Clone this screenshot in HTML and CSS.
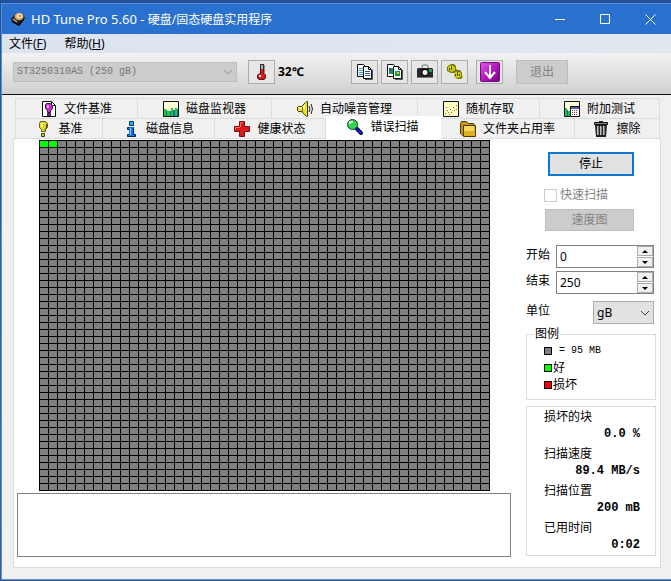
FILE: index.html
```html
<!DOCTYPE html>
<html lang="zh-CN">
<head>
<meta charset="utf-8">
<meta name="viewport" content="width=device-width, initial-scale=1">
<title>HD Tune Pro 5.60</title>
<link rel="stylesheet" href="styles.css">
</head>
<body>
<div class="window">
  <header class="titlebar">
    <svg class="icon" viewBox="0 0 16 16" aria-hidden="true">
      <path d="M6 2l7 1 2 4-6 8-7-4-1-3z" fill="#211d20"/><path d="M2 10l7 3 5-6v2l-5 6-7-4z" fill="#060606"/>
      <ellipse cx="9" cy="5.500" rx="4.500" ry="3.800" fill="#d9a662"/><ellipse cx="9.500" cy="5" rx="3" ry="2.300" fill="#f6dfb3"/><circle cx="10" cy="5" r="1" fill="#a56c3a"/>
      <path d="M3 8l4 3" stroke="#b9aaa2" stroke-width="1.500"/>
    </svg>
    <h1><span class="product">HD Tune Pro 5.60 - </span>硬盘/固态硬盘实用程序</h1>
    <div class="controls">
      <button aria-label="最小化"><svg viewBox="0 0 11 11"><path d="M0 5.500h10"/></svg></button>
      <button aria-label="最大化"><svg viewBox="0 0 11 11"><path d="M.5.500h9v9h-9z"/></svg></button>
      <button aria-label="关闭"><svg viewBox="0 0 11 11"><path d="M.5.500l10 10M10.500.500l-10 10"/></svg></button>
    </div>
  </header>
  <nav class="menubar">
    <a href="#file">文件(<u>F</u>)</a>
    <a href="#help">帮助(<u>H</u>)</a>
  </nav>
  <div class="toolbar">
    <div class="select drive">
      <select aria-label="驱动器" disabled><option>ST3250310AS (250 gB)</option></select>
      <svg viewBox="0 0 10 6" aria-hidden="true"><path d="M1 1l4 4 4-4"/></svg>
    </div>
    <button class="tool" aria-label="温度">
      <svg class="icon" viewBox="0 0 16 16"><path d="M6 0h4v9l2 2v3l-2 2H5l-2-2v-3l3-2z" fill="#611"/><path d="M7 1h2v4H7z" fill="#52d8d8"/><path d="M7 5h2v5l2 1v3l-2 1H6l-2-1v-3l3-1z" fill="#e01818"/><path d="M5 11h2v2H5z" fill="#fff"/><path d="M10 2h1M10 4h1M10 6h1M10 8h1" stroke="#333"/></svg>
    </button>
    <output class="temperature">32℃</output>
    <div class="tools">
      <button class="tool" aria-label="复制文本">
        <svg class="icon" viewBox="0 0 16 16"><path d="M.5.500h6l2 2v10h-8z" fill="#fff" stroke="#111"/><path d="M2 4.500h5M2 6.500h5M2 8.500h5M2 10.500h5" stroke="#2d9be0"/><path d="M6.500 2.500h5l3 3v9h-8z" fill="#fff" stroke="#111"/><path d="M11.500 2.500v3h3" fill="none" stroke="#111"/><path d="M8 7.500h5M8 9.500h5M8 11.500h5" stroke="#2453b8"/><path d="M8 15.500h7.500V6" fill="none" stroke="#555"/></svg>
      </button>
      <button class="tool" aria-label="复制图像">
        <svg class="icon" viewBox="0 0 16 16"><path d="M.5.500h6l2 2v10h-8z" fill="#fff" stroke="#111"/><path d="M2 4h4v6H2z" fill="#169642"/><path d="M2 4h2v3H2z" fill="#2453b8"/><path d="M6.500 2.500h5l3 3v9h-8z" fill="#fff" stroke="#111"/><path d="M11.500 2.500v3h3" fill="none" stroke="#111"/><path d="M8 7h5v5H8z" fill="#159331"/><path d="M10 8h2v2h-2z" fill="#e8c83b"/><path d="M8 7h2v2H8z" fill="#238ad1"/><path d="M8 15.500h7.500V6" fill="none" stroke="#555"/></svg>
      </button>
      <button class="tool" aria-label="截图">
        <svg class="icon" viewBox="0 0 16 16"><path d="M5 4V2l1-1h4l1 1v2" fill="none" stroke="#777"/><path d="M1 4h14l1 1v8H0V5z" fill="#252a2b"/><circle cx="8" cy="8.500" r="4" fill="#111"/><circle cx="8" cy="8.500" r="2.500" fill="#f4f4f4"/><path d="M12 5h3v3h-3z" fill="#18a354"/><path d="M0 13.500h16" stroke="#777"/></svg>
      </button>
      <button class="tool" aria-label="选项">
        <svg class="icon" viewBox="0 0 16 16"><path d="M0 3l2-2 2-1h3l2 2v3l2 1h2l2 3v3l1 1-2 2h-4l-3-3V9L4 9 0 7z" fill="#77770c"/><path d="M1 3l3-2 4 2v3L5 8 1 6zM7 9l3-2 4 2v4l-4 1-3-2z" fill="#cfcf19"/><path d="M4.500 2v4M2.500 4v2M10.500 7v5M8.500 10v2M12.500 10v2" stroke="#4d4d00"/></svg>
      </button>
      <button class="tool save" aria-label="保存">
        <svg class="icon large" viewBox="0 0 20 20"><defs><linearGradient id="violet" x2="1" y2="1"><stop stop-color="#e45ae8"/><stop offset=".55" stop-color="#b313bd"/><stop offset="1" stop-color="#6c0880"/></linearGradient></defs><rect x=".5" y=".5" width="19" height="19" rx="1" fill="url(#violet)" stroke="#6b0f77"/><path d="M10 3v12M5 10l5 6 5-6" fill="none" stroke="#fff" stroke-width="2"/></svg>
      </button>
    </div>
    <button class="push exit" disabled>退出</button>
  </div>

  <main class="content">
    <div class="tabs upper" role="tablist" aria-label="附加功能">
      <button role="tab"><svg class="icon" viewBox="0 0 16 16"><path d="M1.500.500h9l4 4v11h-13z" fill="#fff" stroke="#111"/><path d="M10.500.500v4h4" fill="none" stroke="#111"/><path d="M5.500 2.500h4l2 2v3l-2 2v2h-3v-2l-2-2v-4z" fill="#c32bd0" stroke="#34103a"/><path d="M6 4h2v3H6z" fill="#f2a5fa"/><path d="M6.500 12.500h3v2h-3z" fill="#c32bd0" stroke="#34103a"/></svg>文件基准</button>
      <button role="tab"><svg class="icon" viewBox="0 0 16 16"><path d="M.5.500h15v15H.5z" fill="#ffffd8" stroke="#111"/><path d="M1 8h2v7H1zM4 10h3v5H4zM8 7h2v8H8zM12 7h2v8h-2z" fill="#18ce38"/><path d="M3 9h1v6H3zM7 10h1v5H7zM10 9h2v6h-2zM14 8h1v7h-1z" fill="#1764b0"/></svg>磁盘监视器</button>
      <button role="tab"><svg class="icon" viewBox="0 0 16 16"><path d="M.5 6.500l1-1h3l4-4 1-1h1v15h-1l-5-5h-3l-1-1z" fill="#e9e329" stroke="#3c3800"/><path d="M2 6h3l3-3v5H2z" fill="#ffffa0"/><path d="M5.500 6v5" stroke="#766d09"/><path d="M12 5q2 3 0 6M14 3q3 5 0 10" fill="none" stroke="#222"/></svg>自动噪音管理</button>
      <button role="tab"><svg class="icon" viewBox="0 0 16 16"><path d="M.5.500h15v15H.5z" fill="#ffffc4" stroke="#111"/><path d="M2 12h1v1H2zM4 9h1v1H4zM5 11h1v1H5zM7 8h1v1H7zM8 11h1v1H8zM10 6h1v1h-1zM11 9h1v1h-1zM13 4h1v1h-1zM13 8h1v1h-1zM3 6h1v1H3zM6 13h1v1H6z" fill="#9b681a"/></svg>随机存取</button>
      <button role="tab"><svg class="icon" viewBox="0 0 16 16"><path d="M.5.500h15v15H.5z" fill="#ffffd8" stroke="#111"/><path d="M1 7h2v8H1zM4 10h2v5H4z" fill="#11c744"/><path d="M3 9h1v6H3z" fill="#1764b0"/><path d="M6.500 5.500h9v10h-9z" fill="#fff" stroke="#111"/><path d="M7 6h8v2H7z" fill="#5360a0"/><path d="M8 9.500h6M8 11.500h6M8 13.500h6" stroke="#a3245c" stroke-dasharray="1 1"/></svg>附加测试</button>
    </div>
    <div class="tabs lower" role="tablist" aria-label="功能">
      <button role="tab"><svg class="icon" viewBox="0 0 16 16"><path d="M5.500.500h5l2 2v4l-2 2v2h-4v-2l-2-2v-4z" fill="#ded71c" stroke="#655f10"/><path d="M6 2h2v4H6z" fill="#ffffb0"/><path d="M11.500 3v4l-2 2" fill="none" stroke="#444"/><path d="M6.500 12.500h3v3h-3z" fill="#ded71c" stroke="#333"/></svg>基准</button>
      <button role="tab"><svg class="icon" viewBox="0 0 16 16"><path d="M6.500.500h4v4h-4z" fill="#2ea5ff" stroke="#053473"/><path d="M4.500 6.500h6v7h2v2h-8v-2h2v-5h-2z" fill="#1473ed" stroke="#052455"/><path d="M6 6h4v9H6z" fill="#1473ed"/><path d="M7 7h1v7H7z" fill="#7bccff"/></svg>磁盘信息</button>
      <button role="tab"><svg class="icon" viewBox="0 0 16 16"><path d="M5.500.500h5v5h5v5h-5v5h-5v-5h-5v-5h5z" fill="#db1a1a" stroke="#701010"/><path d="M6.500 6V1.500H9M1.500 9V6.500H6" fill="none" stroke="#f06a6a"/></svg>健康状态</button>
      <button role="tab" class="active" aria-selected="true"><svg class="icon" viewBox="0 0 16 16"><path d="M10 10l4 4" stroke="#050538" stroke-width="4" stroke-linecap="square"/><path d="M10 10l4 4" stroke="#171bbb" stroke-width="2" stroke-linecap="square"/><circle cx="5.500" cy="5.500" r="5" fill="#35d34e" stroke="#164a28"/><path d="M3 5V3h3" fill="none" stroke="#cbffd0" stroke-width="2"/></svg>错误扫描</button>
      <button role="tab"><svg class="icon" viewBox="0 0 16 16"><path d="M.5 12.500v-10l1-2h5l2 2h5l1 2v10h-12z" fill="#c79511" stroke="#4c3904"/><path d="M3.500 4.500h12v11h-12z" fill="#dcb020" stroke="#4c3904"/><path d="M4 5h10v5H4z" fill="#f7d858"/></svg>文件夹占用率</button>
      <button role="tab"><svg class="icon" viewBox="0 0 16 16"><path d="M6 0h4v2H6z" fill="#222"/><path d="M1.500 1.500h13v2h-13z" fill="#888" stroke="#111"/><path d="M2 4h12l-1 12H3z" fill="#222"/><path d="M4.500 5v9M7.500 5v9M10.500 5v9" stroke="#c4c4c4"/><path d="M5.500 5v9M8.500 5v9M11.500 5v9" stroke="#777"/></svg>擦除</button>
    </div>

    <section class="panel">
      <div class="scan">
        <div class="block-map" role="img" aria-label="扫描块"><i class="block"></i><i class="block"></i></div>
        <textarea class="log" aria-label="扫描日志" readonly></textarea>
      </div>
      <form class="side">
        <button type="button" class="push stop">停止</button>
        <label class="quick"><input type="checkbox" disabled>快速扫描</label>
        <button type="button" class="push speed" disabled>速度图</button>
        <div class="field">
          <label for="start">开始</label>
          <div class="spinner">
            <input id="start" type="text" value="0">
            <div class="steps"><button type="button" aria-label="增加开始值"><i class="up"></i></button><button type="button" aria-label="减少开始值"><i class="down"></i></button></div>
          </div>
        </div>
        <div class="field">
          <label for="end">结束</label>
          <div class="spinner">
            <input id="end" type="text" value="250">
            <div class="steps"><button type="button" aria-label="增加结束值"><i class="up"></i></button><button type="button" aria-label="减少结束值"><i class="down"></i></button></div>
          </div>
        </div>
        <div class="field unit">
          <label for="unit">单位</label>
          <div class="select">
            <select id="unit"><option>gB</option></select>
            <svg viewBox="0 0 10 6" aria-hidden="true"><path d="M1 1l4 4 4-4"/></svg>
          </div>
        </div>
        <fieldset class="legend">
          <legend>图例</legend>
          <ul>
            <li><i class="swatch"></i><span class="mono">= 95 MB</span></li>
            <li><i class="swatch good"></i>好</li>
            <li><i class="swatch bad"></i>损坏</li>
          </ul>
        </fieldset>
        <dl class="stats">
          <dt>损坏的块</dt><dd>0.0 %</dd>
          <dt>扫描速度</dt><dd>89.4 MB/s</dd>
          <dt>扫描位置</dt><dd>200 mB</dd>
          <dt>已用时间</dt><dd>0:02</dd>
        </dl>
      </form>
    </section>
  </main>
</div>
</body>
</html>
```
FILE: styles.css
```css
* {
  box-sizing: border-box;
}

body {
  margin: 0;
  min-height: 100vh;
  display: flex;
  padding: 3px 0 1px 1px;
  background: linear-gradient(#24509b, #35689f 80%, #3d5789);
  color: #000;
  font: 12px/16px "Noto Sans", "Noto Sans CJK SC", sans-serif;
}

button,
input,
select,
textarea {
  margin: 0;
  padding: 0;
  border: 0;
  border-radius: 0;
  font: inherit;
  color: inherit;
}

.window {
  flex: 1;
  min-width: 0;
  display: flex;
  flex-direction: column;
  border: solid #5b91d5;
  border-width: 1px 0 1px 1px;
  background: #f0f0f0;
}

.icon {
  display: block;
  flex: none;
  width: 16px;
  height: 16px;
}

.icon.large {
  width: 20px;
  height: 20px;
}

.titlebar {
  display: flex;
  align-items: center;
  height: 30px;
  padding: 0 15px 0 8px;
  background: #2a70ce;
  color: #fff;
}

.titlebar h1 {
  margin: 0 auto 0 5px;
  font-size: 12px;
  font-weight: normal;
  white-space: pre;
}

.product {
  font-size: 13px;
}

.controls {
  display: flex;
  gap: 34px;
}

.controls button {
  display: block;
  background: none;
}

.controls svg {
  display: block;
  width: 11px;
  height: 11px;
  fill: none;
  stroke: #fff;
}

.menubar {
  display: flex;
  gap: 18px;
  padding: 2px 7px 1px;
  background: linear-gradient(90deg, #dbe3ef, #e0e8f0);
}

.menubar a {
  color: inherit;
  text-decoration: none;
}

.toolbar {
  display: flex;
  align-items: center;
  height: 42px;
  padding: 0 11px 3px;
  border-bottom: 1px solid #111;
  background: linear-gradient(#f2f2f2, #d0d0d0);
}

.select {
  display: grid;
  align-items: center;
}

.select > * {
  grid-area: 1 / 1;
}

.select select {
  appearance: none;
  width: 100%;
  height: 23px;
  padding: 0 3px;
  border: 1px solid #adadad;
  background: #e1e1e1;
}

.select svg {
  justify-self: end;
  width: 10px;
  height: 6px;
  margin-right: 4px;
  fill: none;
  stroke: #444;
  pointer-events: none;
}

.drive {
  width: 224px;
  margin-right: 11px;
}

.drive select {
  height: 20px;
  border-color: #bfbfbf;
  background: #ccc;
  color: #777;
  opacity: 1;
  font: 10px/18px "Liberation Mono", monospace;
}

.drive svg {
  stroke: #999;
}

.tool {
  display: grid;
  place-items: center;
  width: 27px;
  height: 24px;
  border: 1px solid #adadad;
  background: #e6e6e6;
}

.temperature {
  width: 73px;
  margin-left: 3px;
  font-weight: bold;
}

.tools {
  display: flex;
  gap: 3px;
  margin-right: 13px;
}

.save {
  margin-left: 5px;
}

.push {
  height: 24px;
  border: 1px solid #adadad;
  background: #e1e1e1;
}

.push:disabled {
  border-color: #bfbfbf;
  background: #ccc;
  color: #838383;
}

.exit {
  width: 52px;
}

.content {
  flex: 1;
  display: flex;
  flex-direction: column;
  padding: 3px 10px 11px 11px;
}

.tabs {
  display: grid;
  margin: 0 1px 0 2px;
  border-left: 1px solid #dcdcdc;
}

.upper {
  grid-template-columns: 122fr 134fr 146fr 122fr 120fr;
}

.lower {
  grid-template-columns: 87fr 112fr 111fr 115fr 134fr 85fr;
}

.tabs button {
  display: flex;
  align-items: center;
  justify-content: center;
  gap: 7px;
  height: 20px;
  border: solid #dcdcdc;
  border-width: 1px 1px 0 0;
  background: #f0f0f0;
  white-space: nowrap;
}

.tabs .active {
  height: 24px;
  margin: -2px 0;
  padding-bottom: 4px;
  border-color: #fff;
  background: #fff;
  z-index: 1;
}

.panel {
  flex: 1;
  display: flex;
  justify-content: space-between;
  gap: 15px;
  padding: 1px 4px 10px 3px;
  border: 1px solid #dcdcdc;
  background: #fff;
}

.scan {
  flex: 1;
  min-width: 0;
  display: flex;
  flex-direction: column;
  gap: 2px;
}

.block-map {
  display: grid;
  grid-template-columns: repeat(50, 8px);
  grid-template-rows: repeat(50, 6px);
  gap: 1px;
  width: 451px;
  margin-left: 22px;
  padding: 1px;
  background:
    repeating-linear-gradient(90deg, #000 0 1px, transparent 1px 9px),
    repeating-linear-gradient(#000 0 1px, #808080 1px 7px);
}

.block {
  background: #0f0;
}

.log {
  flex: 1;
  display: block;
  width: 100%;
  min-height: 62px;
  border: 1px solid #828282;
  background: #fff;
  resize: none;
}

.side {
  flex: none;
  display: flex;
  flex-direction: column;
  width: 130px;
  padding-top: 12px;
}

.stop {
  width: 86px;
  margin-left: 22px;
  border: 2px solid #0a78d0;
}

.quick {
  display: flex;
  align-items: center;
  gap: 3px;
  margin: 11px 0 6px 18px;
  color: #838383;
}

.quick input {
  appearance: none;
  width: 13px;
  height: 13px;
  border: 1px solid #ccc;
  background: #fff;
}

.speed {
  width: 89px;
  height: 22px;
  margin: 0 0 14px 19px;
}

.field {
  display: flex;
  justify-content: space-between;
  margin: 0 2px 3px 0;
}

.field label {
  padding-top: 2px;
}

.spinner {
  display: flex;
  width: 98px;
  height: 23px;
  border: 1px solid #828282;
}

.spinner input {
  flex: 1;
  min-width: 0;
  padding-left: 3px;
}

.steps {
  display: grid;
  gap: 1px;
  width: 16px;
}

.steps button {
  display: grid;
  place-items: center;
  border: 1px solid #adadad;
  background: #f0f0f0;
}

.up,
.down {
  border: solid transparent;
  border-width: 0 3px;
}

.up {
  border-bottom: 3px solid #000;
}

.down {
  border-top: 3px solid #000;
}

.unit {
  margin: 4px 2px 2px 0;
}

.unit .select {
  width: 61px;
}

.legend {
  margin: 0;
  padding: 0 0 6px 17px;
  border: 1px solid #dcdcdc;
}

.legend legend {
  margin-left: -10px;
  padding: 0 1px;
}

.legend ul {
  margin: 0;
  padding: 0;
  list-style: none;
}

.legend li {
  display: flex;
  align-items: center;
  gap: 1px;
  height: 17px;
}

.swatch {
  width: 8px;
  height: 8px;
  border: 1px solid #000;
  background: #808080;
}

.good {
  background: #0f0;
}

.bad {
  background: #f00;
}

.mono {
  padding-left: 6px;
  font: 10px/16px "Liberation Mono", monospace;
}

.stats {
  margin: 6px 0 0;
  padding: 0 15px 0 17px;
  border: 1px solid #dcdcdc;
}

.stats dt {
  line-height: 20px;
}

.stats dd {
  margin: 0 0 3px;
  font: bold 12px/14px "Liberation Mono", monospace;
  text-align: right;
}
```
